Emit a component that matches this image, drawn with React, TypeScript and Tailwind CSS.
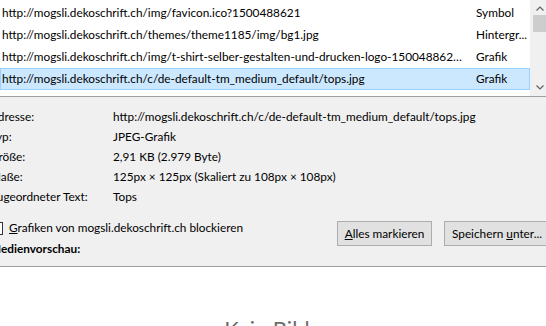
import React from 'react';

const rows = [
  { url: 'http://mogsli.dekoschrift.ch/img/favicon.ico?1500488621', type: 'Symbol' },
  { url: 'http://mogsli.dekoschrift.ch/themes/theme1185/img/bg1.jpg', type: 'Hintergr...' },
  { url: 'http://mogsli.dekoschrift.ch/img/t-shirt-selber-gestalten-und-drucken-logo-1500488621.jpg', type: 'Grafik' },
  { url: 'http://mogsli.dekoschrift.ch/c/de-default-tm_medium_default/tops.jpg', type: 'Grafik', selected: true },
];

const details = [
  ['Adresse:', 'http://mogsli.dekoschrift.ch/c/de-default-tm_medium_default/tops.jpg'],
  ['Typ:', 'JPEG-Grafik'],
  ['Größe:', '2,91 KB (2.979 Byte)'],
  ['Maße:', '125px × 125px (Skaliert zu 108px × 108px)'],
  ['Zugeordneter Text:', 'Tops'],
];

export default function App() {
  return (
    <div className="w-[546px] h-[326px] overflow-hidden bg-[#f0f0f0] text-black text-[11.8px] flex flex-col" style={{ fontFamily: 'Lato, "Open Sans", sans-serif' }}>
      {/* media list */}
      <div className="h-[97px] shrink-0 bg-white border-b border-[#a0a0a0] flex">
        <div className="flex-1 min-w-0 pt-[2px]">
          {rows.map((r) => (
            <div
              key={r.url}
              className={`h-[22px] flex items-center border ${r.selected ? 'bg-[#cce8ff] border-[#99d1ff]' : 'border-transparent'}`}
            >
              <div className="w-[475px] shrink-0 pl-[1px] pr-[8px] truncate">{r.url}</div>
              <div className="flex-1 min-w-0 whitespace-nowrap overflow-hidden">{r.type}</div>
            </div>
          ))}
        </div>
        <div className="w-[16px] shrink-0 bg-[#f0f0f0] flex flex-col items-center justify-between py-[6px] pl-[3px]">
          <svg width="8" height="5" viewBox="0 0 8 5"><path d="M0.5 4.5L4 1L7.5 4.5" fill="none" stroke="#606060" strokeWidth="1.2" /></svg>
          <div className="flex-1 w-full pt-[4px]">
            <div className="h-[17px] w-full bg-[#cdcdcd]" />
          </div>
          <svg width="8" height="5" viewBox="0 0 8 5"><path d="M0.5 0.5L4 4L7.5 0.5" fill="none" stroke="#606060" strokeWidth="1.2" /></svg>
        </div>
      </div>

      {/* properties */}
      <div className="h-[170px] shrink-0 border-b border-[#a0a0a0] -ml-[10px] pt-[10px]">
        {details.map(([k, v]) => (
          <div key={k} className="h-[20px] flex items-center">
            <div className="w-[123px] shrink-0 whitespace-nowrap">{k}</div>
            <div className="whitespace-nowrap">{v}</div>
          </div>
        ))}
        <div className="flex items-start mt-[11px]">
          <div className="flex-1">
            <div className="h-[20px] flex items-center gap-[6px]">
              <span className="w-[13px] h-[13px] border border-[#333] bg-white" />
              <span className="whitespace-nowrap"><span className="underline">G</span>rafiken von mogsli.dekoschrift.ch blockieren</span>
            </div>
            <div className="h-[21px] flex items-center font-bold">Medienvorschau:</div>
          </div>
          <div className="flex gap-[12px] pt-[3px] -mr-[4px]">
            <button className="h-[25px] w-[95px] bg-[#e1e1e1] border border-[#adadad] whitespace-nowrap"><span className="underline">A</span>lles markieren</button>
            <button className="h-[25px] w-[106px] bg-[#e1e1e1] border border-[#adadad] text-left pl-[7px] whitespace-nowrap">Speichern <span className="underline">u</span>nter...</button>
          </div>
        </div>
      </div>

      {/* preview */}
      <div className="flex-1 bg-white flex justify-center pt-[51px]">
        <div className="text-[22px] text-[#6d6d6d] pr-[12px] whitespace-nowrap leading-none">Kein Bild</div>
      </div>
    </div>
  );
}
